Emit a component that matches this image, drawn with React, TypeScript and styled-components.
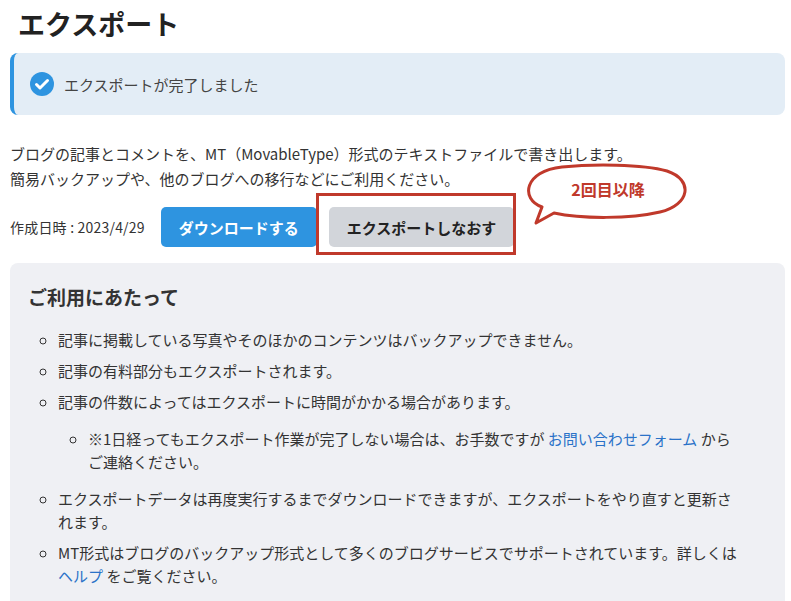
import React from 'react';
import styled, { createGlobalStyle } from 'styled-components';

const Global = createGlobalStyle`
  body { margin: 0; background: #fff; font-family: "Segoe UI", "Noto Sans CJK JP", "Noto Sans", sans-serif; color: #333; }
`;

const Page = styled.div`
  padding: 0 6px 0 10px;
  width: 775px;
`;

const Title = styled.h1`
  font-size: 27px;
  font-weight: 700;
  color: #222;
  margin: 0;
  padding: 4px 8px 0;
  line-height: 40px;
`;

const Alert = styled.div`
  margin-top: 9px;
  height: 62px;
  display: flex;
  align-items: center;
  gap: 10px;
  padding-left: 16px;
  background: #e3edf6;
  border-left: 4px solid #2e94e0;
  border-radius: 8px;
  font-size: 15px;
  color: #444;
`;

const Para = styled.p`
  margin: 26px 0 0;
  font-size: 15px;
  line-height: 25px;
  color: #333;
`;

const ActionRow = styled.div`
  position: relative;
  margin-top: 8px;
  display: flex;
  align-items: center;
  gap: 12px;
  height: 56px;
  font-size: 14px;
`;

const DateText = styled.span`
  letter-spacing: 0.2px;
  margin-right: 4px;
`;

const Button = styled.button<{ $primary?: boolean }>`
  height: 40px;
  padding: 0 18px;
  border: none;
  border-radius: 5px;
  font-family: inherit;
  font-size: 15px;
  font-weight: 700;
  color: ${p => (p.$primary ? '#fff' : '#222')};
  background: ${p => (p.$primary ? '#2e94e0' : '#d2d5da')};
`;

const Highlight = styled.div`
  position: absolute;
  left: 306px;
  top: -6px;
  width: 194px;
  height: 56px;
  border: 3px solid #c0392b;
`;

const Callout = styled.svg`
  position: absolute;
  left: 502px;
  top: -36px;
`;

const Notes = styled.div`
  margin-top: 8px;
  background: #eff0f4;
  border-radius: 8px;
  padding: 20px 40px 20px 18px;
  min-height: 330px;
`;

const NotesTitle = styled.h2`
  margin: 0 0 18px;
  font-size: 19px;
  font-weight: 700;
  color: #333;
`;

const List = styled.ul<{ $nested?: boolean }>`
  list-style: circle;
  margin: ${p => (p.$nested ? '14px 0 14px' : '0')};
  padding-left: 30px;
  padding-right: ${p => (p.$nested ? '10px' : '0')};
  font-size: 15px;
  line-height: 23px;
`;

const Item = styled.li`
  margin-bottom: 8px;
`;

const Link = styled.a`
  color: #2a72c8;
  text-decoration: none;
`;

export default function App() {
  return (
    <Page>
      <Global />
      <Title>エクスポート</Title>
      <Alert>
        <svg width="24" height="24" viewBox="0 0 24 24">
          <circle cx="12" cy="12" r="12" fill="#2e94e0" />
          <path d="M6.5 12.5l3.5 3.5 7.5-7.5" stroke="#fff" strokeWidth="3" fill="none" strokeLinecap="round" strokeLinejoin="round" />
        </svg>
        エクスポートが完了しました
      </Alert>
      <Para>
        ブログの記事とコメントを、MT（MovableType）形式のテキストファイルで書き出します。<br />
        簡易バックアップや、他のブログへの移行などにご利用ください。
      </Para>
      <ActionRow>
        <DateText>作成日時 : 2023/4/29</DateText>
        <Button $primary>ダウンロードする</Button>
        <Button>エクスポートしなおす</Button>
        <Highlight />
        <Callout width="180" height="64" viewBox="0 0 180 64">
          <path d="M30 44 C 8 36, 12 8, 50 4 C 80 1, 130 1, 155 8 C 182 17, 178 42, 148 49 C 118 56, 70 56, 42 50 L 24 60 Z" fill="#fff" stroke="#c0392b" strokeWidth="3" strokeLinejoin="round" />
          <text x="96" y="33" textAnchor="middle" fontSize="16" fontWeight="700" fill="#c0392b" fontFamily="Noto Sans CJK JP, sans-serif">2回目以降</text>
        </Callout>
      </ActionRow>
      <Notes>
        <NotesTitle>ご利用にあたって</NotesTitle>
        <List>
          <Item>記事に掲載している写真やそのほかのコンテンツはバックアップできません。</Item>
          <Item>記事の有料部分もエクスポートされます。</Item>
          <Item>
            記事の件数によってはエクスポートに時間がかかる場合があります。
            <List $nested>
              <li>※1日経ってもエクスポート作業が完了しない場合は、お手数ですが <Link>お問い合わせフォーム</Link> から<br />ご連絡ください。</li>
            </List>
          </Item>
          <Item>エクスポートデータは再度実行するまでダウンロードできますが、エクスポートをやり直すと更新されます。</Item>
          <Item>MT形式はブログのバックアップ形式として多くのブログサービスでサポートされています。詳しくは<br /><Link>ヘルプ</Link> をご覧ください。</Item>
        </List>
      </Notes>
    </Page>
  );
}
